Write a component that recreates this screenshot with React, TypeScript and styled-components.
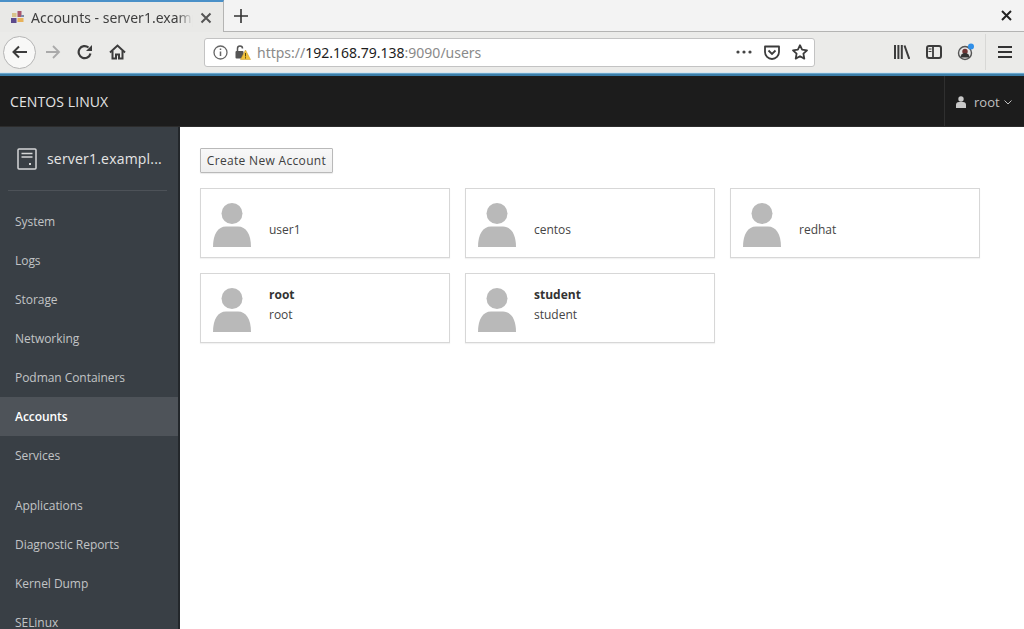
import React from "react";
import styled, { createGlobalStyle } from "styled-components";

const Global = createGlobalStyle`
  html, body { margin: 0; padding: 0; height: 100%; overflow: hidden; background: #fff; }
  #root { height: 100%; }
`;

const Page = styled.div`
  width: 1024px; height: 629px; display: flex; flex-direction: column; overflow: hidden;
  font-family: "Open Sans", sans-serif;
`;
const TabStrip = styled.div`
  height: 32px; box-sizing: border-box; display: flex; align-items: stretch;
  background: #f3f3f3; border-bottom: 1px solid #b4b4b3;
`;
const Tab = styled.div`
  width: 224px; box-sizing: border-box; display: flex; align-items: center; padding: 1px 0 0 10px;
  background: #e9e9e7; border-top: 2px solid #4a90c8; border-right: 1px solid #b4b4b3; margin-bottom: -1px;
`;
const Favicon = styled.svg`width: 15px; height: 15px; flex-shrink: 0; margin-right: 1px;`;
const TabTitle = styled.span`
  margin-left: 5px; width: 162px; overflow: hidden; white-space: nowrap; font-size: 14px; color: #3f3f3f;
  font-family: "Noto Sans", sans-serif;
  mask-image: linear-gradient(90deg, #000 90%, transparent);
`;
const PlainIconButton = styled.div<{ $w?: number; $ml?: number }>`
  width: ${(p) => p.$w ?? 24}px; margin-left: ${(p) => p.$ml ?? 0}px; display: flex; align-items: center; justify-content: center;
  flex-shrink: 0;
`;
const Spacer = styled.div`flex: 1;`;
const Toolbar = styled.div`
  height: 40px; display: flex; align-items: center; background: #ebebe9; padding-left: 3px;
`;
const BackButton = styled.div`
  width: 33px; height: 33px; box-sizing: border-box; border: 1px solid #b5b5b5; border-radius: 50%; background: #f8f8f7;
  display: flex; align-items: center; justify-content: center; flex-shrink: 0;
`;
const UrlBar = styled.div`
  width: 611px; height: 29px; box-sizing: border-box; margin-left: 71px; display: flex; align-items: center;
  background: #fff; border: 1px solid #c3c3c3; border-radius: 3px; padding-left: 8px; flex-shrink: 0;
`;
const UrlText = styled.span`
  font-family: "Noto Sans", sans-serif; font-size: 14px; color: #8a8a8a; margin-left: 6px; white-space: nowrap;
`;
const UrlHost = styled.span`color: #1d1d1d;`;
const ToolbarDivider = styled.div`width: 1px; height: 36px; background: #d8d8d6; margin-left: 3px;`;
const LoadBar = styled.div`
  height: 4px; background: linear-gradient(#d9e6ec 0 25%, #6aa6cc 25% 60%, #3c7ea8 60%);
`;
const Masthead = styled.header`
  height: 51px; flex-shrink: 0; background: #1c1c1c; display: flex; align-items: center; justify-content: space-between;
  border-bottom: 1px solid #2c2c2c; box-sizing: border-box;
`;
const Brand = styled.div`margin-left: 10px; font-size: 14px; color: #e4e4e4; letter-spacing: 0.1px;`;
const UserMenu = styled.div`
  height: 100%; width: 80px; box-sizing: border-box; display: flex; align-items: center; padding: 1px 0 0 11px; gap: 8px;
  border-left: 1px solid #2f2f2f; font-size: 13px; color: #c0c0c0;
`;
const Chevron = styled.svg`width: 8px; height: 5px; margin: 1px 0 0 -4px;`;
const Body = styled.div`flex: 1; display: flex; min-height: 0;`;
const Sidebar = styled.nav`
  width: 180px; box-sizing: border-box; flex-shrink: 0; background: #393f45; border-right: 2px solid #23272b; overflow: hidden;
`;
const HostRow = styled.div`
  height: 63px; margin: 0 11px 0 8px; padding-left: 9px; display: flex; align-items: center; gap: 10px;
  border-bottom: 1px solid #4d5258; font-size: 14px; color: #e6e6e6; letter-spacing: 0.2px; white-space: nowrap;
`;
const NavList = styled.div<{ $top: number }>`padding-top: ${(p) => p.$top}px; display: flex; flex-direction: column;`;
const NavItem = styled.div<{ $active?: boolean }>`
  height: 39px; flex-shrink: 0; display: flex; align-items: center; padding-left: 15px; font-size: 12px; white-space: nowrap;
  letter-spacing: -0.05px;
  color: ${(p) => (p.$active ? "#fff" : "#c2c4c6")};
  font-weight: ${(p) => (p.$active ? 600 : 400)};
  background: ${(p) => (p.$active ? "#4e5359" : "transparent")};
`;
const Main = styled.main`flex: 1; padding: 21px 0 0 20px; background: #fff; min-width: 0;`;
const CreateButton = styled.button`
  display: block; width: 133px; height: 25px; padding: 0; border: 1px solid #b9b9b9; border-radius: 1px;
  background: linear-gradient(#f8f8f8, #eeeeee); box-shadow: 0 1px 1px rgba(0,0,0,.08);
  font-family: "Open Sans", sans-serif; font-size: 12px; color: #404040; letter-spacing: 0.32px;
`;
const Cards = styled.div`
  display: grid; grid-template-columns: repeat(3, 250px); grid-auto-rows: 70px; gap: 15px; margin-top: 15px;
`;
const Card = styled.div`
  box-sizing: border-box; display: flex; align-items: center; padding-left: 12px; background: #fff;
  border: 1px solid #d7d7d7; box-shadow: 0 1px 1px rgba(0,0,0,.05);
`;
const Avatar = styled.svg`width: 38px; height: 44px; flex-shrink: 0; margin-top: 4px;`;
const Names = styled.div`
  margin-left: 18px; padding-bottom: 7px; display: flex; flex-direction: column; gap: 3px; font-size: 12px; line-height: 17px; color: #454545;
`;
const FullName = styled.div`min-height: 17px; font-weight: 700; color: #333;`;

const Stroke = { fill: "none", stroke: "#3c3c3c", strokeWidth: 1.8 };

const people = [
  { login: "user1" }, { login: "centos" }, { login: "redhat" },
  { name: "root", login: "root" }, { name: "student", login: "student" },
];
const navA = ["System", "Logs", "Storage", "Networking", "Podman Containers", "Accounts", "Services"];
const navB = ["Applications", "Diagnostic Reports", "Kernel Dump", "SELinux"];

export default function App() {
  return (
    <Page>
      <Global />
      <TabStrip>
        <Tab>
          <Favicon viewBox="0 0 15 15">
            <rect x="1" y="8" width="5.500" height="5" fill="#5d4a8c" />
            <rect x="7.500" y="8" width="6" height="4" fill="#e8b25a" />
            <rect x="2" y="3" width="4.500" height="4" fill="#d9c48c" />
            <rect x="7.500" y="1" width="4" height="6" fill="#a8566e" />
            <rect x="11" y="5" width="3" height="2" fill="#7d8aa8" />
          </Favicon>
          <TabTitle>Accounts - server1.example.com</TabTitle>
          <PlainIconButton $w={20} $ml={3}>
            <svg width="12" height="12" viewBox="0 0 12 12"><path d="M1.500 1.500l9 9M10.500 1.500l-9 9" stroke="#555" strokeWidth="2" /></svg>
          </PlainIconButton>
        </Tab>
        <PlainIconButton $w={34}>
          <svg width="14" height="14" viewBox="0 0 14 14"><path d="M7 0v14M0 7h14" stroke="#333" strokeWidth="1.600" /></svg>
        </PlainIconButton>
        <Spacer />
        <PlainIconButton $w={36}>
          <svg width="11" height="11" viewBox="0 0 11 11"><path d="M1 1l9 9M10 1l-9 9" stroke="#222" strokeWidth="2" /></svg>
        </PlainIconButton>
      </TabStrip>
      <Toolbar>
        <BackButton>
          <svg width="17" height="16" viewBox="0 0 17 16"><path d="M16 8H2.500M8 2.500L2.500 8 8 13.500" {...Stroke} strokeWidth={2} /></svg>
        </BackButton>
        <PlainIconButton $w={34}>
          <svg width="16" height="16" viewBox="0 0 16 16"><path d="M1 8h13M8 2l6 6-6 6" fill="none" stroke="#aaa" strokeWidth="1.800" /></svg>
        </PlainIconButton>
        <PlainIconButton $w={32} $ml={-1}>
          <svg width="16" height="16" viewBox="0 0 16 16"><path d="M13.500 9.500A6 6 0 1 1 11.500 3.500" {...Stroke} strokeWidth={2.200} /><path d="M15 1v6H9z" fill="#3c3c3c" /></svg>
        </PlainIconButton>
        <PlainIconButton $w={32}>
          <svg width="17" height="16" viewBox="0 0 17 16"><path d="M1 8.500l7.500-7 7.500 7" {...Stroke} strokeWidth={2} /><path d="M3.500 7v7.500h3.500V10.500h3v4h3.500V7" {...Stroke} strokeWidth={2} /></svg>
        </PlainIconButton>
        <UrlBar>
          <svg width="15" height="15" viewBox="0 0 15 15"><circle cx="7.500" cy="7.500" r="6.500" fill="none" stroke="#666" strokeWidth="1.300" /><path d="M7.500 6.500v4.500M7.500 3.500v1.600" stroke="#666" strokeWidth="1.500" /></svg>
          <PlainIconButton $w={17} $ml={6}>
            <svg width="17" height="16" viewBox="0 0 17 16">
              <path d="M3.500 7V4.500a2.500 2.500 0 0 1 5 0" fill="none" stroke="#555" strokeWidth="1.500" />
              <rect x="1.500" y="7" width="8" height="7.500" rx="1" fill="#555" />
              <path d="M11.500 6l5 9.500h-10z" fill="#f2c33a" stroke="#c9982a" strokeWidth=".5" />
              <path d="M11.500 9v3.500M11.500 13.200v1.300" stroke="#5a4a10" strokeWidth="1" />
            </svg>
          </PlainIconButton>
          <UrlText>https://<UrlHost>192.168.79.138</UrlHost>:9090/users</UrlText>
          <Spacer />
          <PlainIconButton $w={18}>
            <svg width="16" height="4" viewBox="0 0 16 4"><g fill="#444"><circle cx="2" cy="2" r="1.600" /><circle cx="8" cy="2" r="1.600" /><circle cx="14" cy="2" r="1.600" /></g></svg>
          </PlainIconButton>
          <PlainIconButton $w={28} $ml={5}>
            <svg width="16" height="15" viewBox="0 0 16 15"><path d="M1 1.500h14v5.500a7 7 0 0 1-14 0z" {...Stroke} strokeLinejoin="round" /><path d="M4.500 5.500L8 9l3.500-3.500" {...Stroke} /></svg>
          </PlainIconButton>
          <PlainIconButton $w={28}>
            <svg width="16" height="16" viewBox="0 0 16 16"><path d="M8 1.200l2.100 4.500 4.900.6-3.600 3.400.9 4.900L8 12.200l-4.300 2.400.9-4.900L1 6.300l4.900-.6z" {...Stroke} strokeLinejoin="round" /></svg>
          </PlainIconButton>
        </UrlBar>
        <PlainIconButton $w={32} $ml={71}>
          <svg width="16" height="14" viewBox="0 0 16 14"><path d="M1 0v14M4.400 0v14M7.800 0v14M10.500 0.500l4.800 13.500" fill="none" stroke="#3c3c3c" strokeWidth="2" /></svg>
        </PlainIconButton>
        <PlainIconButton $w={32}>
          <svg width="16" height="14" viewBox="0 0 16 14"><rect x="1" y="1" width="14" height="12" rx="2" {...Stroke} strokeWidth={2} /><path d="M7 1v12" {...Stroke} /><path d="M2.500 4h3M2.500 6.500h3" stroke="#3c3c3c" strokeWidth="1" /></svg>
        </PlainIconButton>
        <PlainIconButton $w={32}>
          <svg width="18" height="18" viewBox="0 0 18 18"><circle cx="8" cy="10" r="6.500" fill="#e6e6e6" stroke="#555" strokeWidth="1.400" /><circle cx="8" cy="8.500" r="2.700" fill="#6e3434" /><path d="M3.500 14.500a4.500 4.500 0 0 1 9 0z" fill="#333" /><circle cx="14" cy="3.500" r="3" fill="#2f8fe8" /></svg>
        </PlainIconButton>
        <ToolbarDivider />
        <PlainIconButton $w={38}>
          <svg width="14" height="12" viewBox="0 0 14 12"><path d="M0 1h14M0 6h14M0 11h14" stroke="#333" strokeWidth="2" /></svg>
        </PlainIconButton>
      </Toolbar>
      <LoadBar />
      <Masthead>
        <Brand>CENTOS LINUX</Brand>
        <UserMenu>
          <svg width="10" height="12" viewBox="0 0 10 12" fill="#c8c8c8"><circle cx="5" cy="3" r="2.700" /><path d="M0 12V9a3 3 0 0 1 3-3h4a3 3 0 0 1 3 3v3z" /></svg>
          <span>root</span>
          <Chevron viewBox="0 0 8 5"><path d="M.5.5L4 4 7.500.5" fill="none" stroke="#c0c0c0" /></Chevron>
        </UserMenu>
      </Masthead>
      <Body>
        <Sidebar>
          <HostRow>
            <svg width="20" height="22" viewBox="0 0 20 22"><rect x="1" y="1" width="18" height="20" rx="1" fill="none" stroke="#d5d6d7" strokeWidth="1.500" /><path d="M4.500 5.500h11M4.500 9h11" stroke="#d5d6d7" strokeWidth="1.500" /><rect x="12" y="15" width="2" height="2" fill="#d5d6d7" /></svg>
            <span>server1.exampl...</span>
          </HostRow>
          <NavList $top={11}>
            {navA.map((n) => <NavItem key={n} $active={n === "Accounts"}>{n}</NavItem>)}
          </NavList>
          <NavList $top={11}>
            {navB.map((n) => <NavItem key={n}>{n}</NavItem>)}
          </NavList>
        </Sidebar>
        <Main>
          <CreateButton>Create New Account</CreateButton>
          <Cards>
            {people.map((p) => (
              <Card key={p.login}>
                <Avatar viewBox="0 0 38 44">
                  <circle cx="19" cy="10.500" r="10.500" fill="#b9b9b9" />
                  <path d="M0 44C0 31 5 23.500 13 23.500h12c8 0 13 7.500 13 20.500z" fill="#b9b9b9" />
                </Avatar>
                <Names>
                  <FullName>{p.name}</FullName>
                  <div>{p.login}</div>
                </Names>
              </Card>
            ))}
          </Cards>
        </Main>
      </Body>
    </Page>
  );
}
